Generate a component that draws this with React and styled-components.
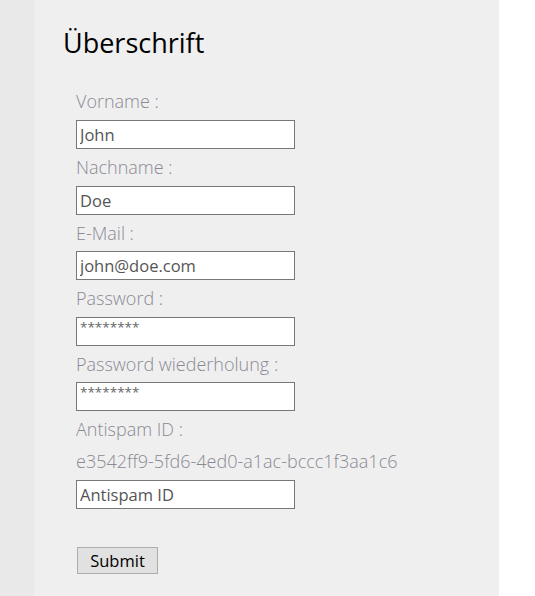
import React from "react";
import styled, { createGlobalStyle } from "styled-components";

const Global = createGlobalStyle`
  html, body { margin: 0; padding: 0; background: #ffffff; }
  body { font-family: "Open Sans", Lato, "Liberation Sans", sans-serif; }
`;

const Page = styled.div`
  display: flex;
  height: 596px;
  overflow: hidden;
`;

const SideStrip = styled.div`
  width: 34px;
  background: #e9e9e9;
  border-right: 1px solid #ececec;
  flex-shrink: 0;
`;

const Panel = styled.main`
  width: 436px;
  padding: 0 0 0 28px;
  background: #efefef;
  flex-shrink: 0;
`;

const Heading = styled.h1`
  margin: 24px 0 21px;
  font-family: "Open Sans", "Liberation Sans", sans-serif;
  font-weight: 400;
  font-size: 27px;
  line-height: 38px;
  color: #000;
`;

const Form = styled.form`
  display: flex;
  flex-direction: column;
  align-items: flex-start;
  padding-left: 13px;
`;

const Label = styled.label`
  display: block;
  font-family: "Open Sans", "Liberation Sans", sans-serif;
  font-weight: 300;
  font-size: 18px;
  line-height: ${(p) => (p.$tight ? "36px" : "37px")};
  color: #8a8a94;
`;

const Token = styled.div`
  font-family: "Open Sans", "Liberation Sans", sans-serif;
  font-weight: 300;
  font-size: 18px;
  line-height: 26px;
  margin-bottom: 6px;
  color: #8a8a94;
`;

const Field = styled.input`
  box-sizing: border-box;
  width: 219px;
  height: 29px;
  margin: 0;
  padding: 0 2px 0 3px;
  border: 1px solid #777;
  border-radius: 0;
  background: #fff;
  font-family: "Open Sans", "Liberation Sans", sans-serif;
  font-size: ${(p) => (p.$secret ? "13.5px" : "16.5px")};
  color: ${(p) => (p.$secret ? "#666" : "#555")};
  outline: none;
  line-height: ${(p) => (p.$secret ? "16px" : "27px")};
  padding-bottom: ${(p) => (p.$secret ? "9px" : "0")};
`;

const Submit = styled.button`
  box-sizing: border-box;
  margin: 38px 0 0 1px;
  width: 81px;
  height: 27px;
  padding: 0;
  border: 1px solid #adadad;
  border-radius: 0;
  background: #e1e1e1;
  font-family: "Open Sans", "Liberation Sans", sans-serif;
  font-size: 16.5px;
  color: #000;
`;

const fields = [
  { label: "Vorname :", value: "John" },
  { label: "Nachname :", value: "Doe" },
  { label: "E-Mail :", value: "john@doe.com", tight: true },
  { label: "Password :", value: "********", secret: true },
  { label: "Password wiederholung :", value: "********", secret: true, tight: true },
];

export default function App() {
  return (
    <>
      <Global />
      <Page>
        <SideStrip />
        <Panel>
          <Heading>Überschrift</Heading>
          <Form onSubmit={(e) => e.preventDefault()}>
            {fields.map((f) => (
              <React.Fragment key={f.label}>
                <Label $tight={f.tight}>{f.label}</Label>
                <Field type="text" defaultValue={f.value} $secret={f.secret} />
              </React.Fragment>
            ))}
            <Label>Antispam ID :</Label>
            <Token>e3542ff9-5fd6-4ed0-a1ac-bccc1f3aa1c6</Token>
            <Field type="text" defaultValue="Antispam ID" />
            <Submit type="submit">Submit</Submit>
          </Form>
        </Panel>
      </Page>
    </>
  );
}
